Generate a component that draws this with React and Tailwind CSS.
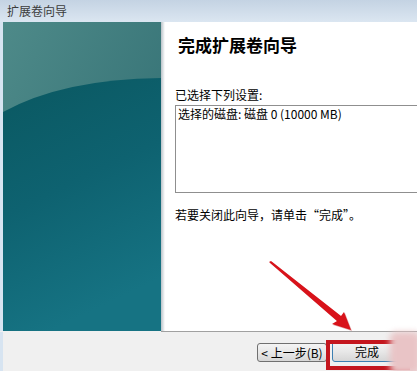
export default function App() {
    const cjk = { fontFamily: '"Noto Sans CJK SC", "Noto Sans", sans-serif' }

    return (
        <div
            className="relative w-[417px] h-[371px] overflow-hidden bg-[#f0f0f0] text-black"
            style={cjk}
        >
            {/* title bar */}
            <div className="h-[22px] bg-gradient-to-b from-[#c4d3e3] to-[#dbe6f1] flex items-center pl-[7px]">
                <span className="text-[12px] leading-none text-[#3c3c3c]">扩展卷向导</span>
            </div>

            {/* wizard body */}
            <div className="flex h-[309px] bg-[#d7e4f1] pl-[3px]">
                <div className="w-[158px] h-full shrink-0">
                    <svg width="158" height="309" viewBox="0 0 158 309">
                        <defs>
                            <linearGradient id="top" x1="0" y1="0" x2="1" y2="1">
                                <stop offset="0" stopColor="#4e8a89" />
                                <stop offset="1" stopColor="#2d6a6f" />
                            </linearGradient>
                            <linearGradient id="low" x1="0" y1="0" x2="0.3" y2="1">
                                <stop offset="0" stopColor="#0a5861" />
                                <stop offset="0.5" stopColor="#0e6270" />
                                <stop offset="1" stopColor="#167383" />
                            </linearGradient>
                        </defs>
                        <rect width="158" height="309" fill="url(#top)" />
                        <path d="M0,90 Q60,57 158,56 L158,309 L0,309 Z" fill="url(#low)" />
                    </svg>
                </div>
                <div className="w-[4px] h-full bg-gradient-to-r from-[#b9c2c8] to-white shrink-0" />
                <div className="flex-1 bg-white pl-[10px] pt-[12px] overflow-hidden">
                    <div className="text-[17px] font-bold leading-[22px] pl-[3px]">完成扩展卷向导</div>
                    <div className="mt-[32px] text-[12px] leading-[14px]">已选择下列设置:</div>
                    <div className="mt-[3px] w-[260px] h-[88px] border border-[#8f8f8f] px-[2px] py-[1px] text-[12px] leading-[14px]">
                        选择的磁盘: 磁盘 0 (10000 MB)
                    </div>
                    <div className="mt-[15px] text-[12px] leading-[14px]">若要关闭此向导，请单击“完成”。</div>
                </div>
            </div>

            {/* separator + button strip */}
            <div className="h-px bg-[#a0a0a0] ml-[161px]" />
            <div className="h-[39px] border-l-[3px] border-[#d7e4f1] flex items-start pl-[254px] pt-[11px] gap-[5px]">
                <button className="w-[70px] h-[19px] rounded-[3px] border border-[#707070] bg-gradient-to-b from-[#f4f4f4] via-[#e8e8e8] to-[#d6d6d6] text-[12px] leading-none flex items-center justify-center">
                    &lt; 上一步(B)
                </button>
                <button className="w-[70px] h-[21px] -mt-[2px] rounded-[3px] border border-[#3c7fb1] bg-gradient-to-b from-[#f4f4f4] via-[#e8e8e8] to-[#d6d6d6] text-[12px] leading-none flex items-center justify-center">
                    完成
                </button>
            </div>

            {/* red highlight box */}
            <div className="absolute left-[326px] top-[340px] w-[84px] h-[30px] border-[4px] border-[#c4161e]" />
            {/* pink watermark blob */}
            <div className="absolute left-[390px] top-[332px] w-[30px] h-[42px] bg-[#e9c4c6] blur-[3px] rounded-[6px]" />

            {/* red arrow */}
            <svg className="absolute left-0 top-0" width="417" height="371" viewBox="0 0 417 371">
                <path d="M269,262 L271,261 L341,316 L344,312 L351,330 L332,324 L337,321 Z" fill="#a80c12" opacity="0.35" transform="translate(1,1)" />
                <path d="M269,262 L271,261 L341,316 L344,312 L351,330 L332,324 L337,321 Z" fill="#d8121a" />
            </svg>
        </div>
    )
}
